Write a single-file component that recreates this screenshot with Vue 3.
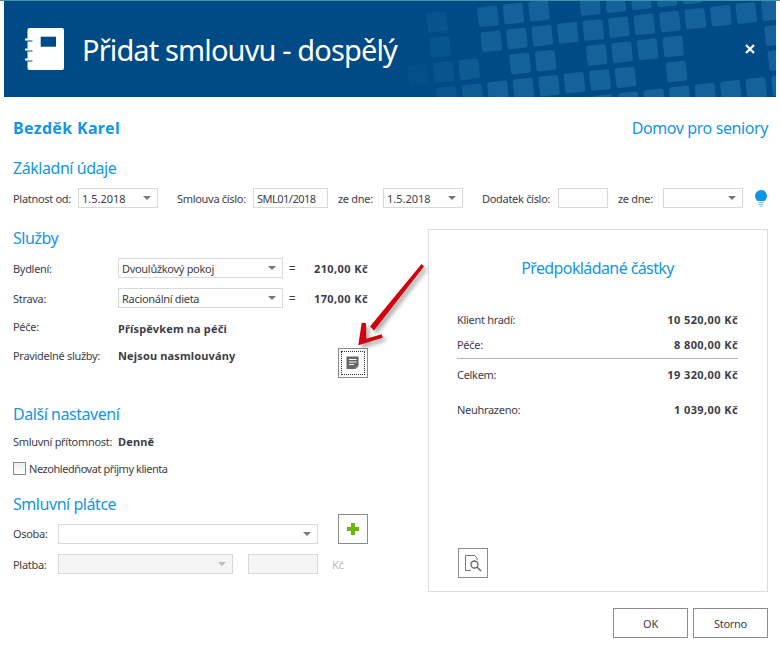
<script setup>
const origin = { x: 400, y: 0 }
const rows = [
  { bx: 570, by: 15, idx: [-6, -4, -3, -2, 0, 1, 2, 3, 4] },
  { bx: 580, by: 90, idx: [-6, -4, -3, -2, -1, 0, 1, 2, 3, 4, 5, 6, 7] },
  { bx: 590, by: 165, idx: [-7, -6, -5, -3, -2, 0, 1, 2, 3, 7] },
  { bx: 600, by: 240, idx: [-6, -5, -4, -3, -2, -1, 0, 1, 3, 7] },
  { bx: 610, by: 315, idx: [-7, 0, 1, 2, 3, 4, 5, 6, 7] }
]
const squares = rows.flatMap((r) =>
  r.idx.map((i) => {
    const x = origin.x + (r.bx + i * 76.5) / 3
    const y = origin.y + (r.by - i * 8.5) / 3
    return { key: `${r.bx}-${i}`, x, y, o: Math.min(1, Math.max(0.12, (x - 400) / 100)) }
  })
)
</script>

<template>
  <div class="page">
    <header class="head">
      <svg class="pattern" width="776" height="96" viewBox="0 1 776 96">
        <rect
          v-for="s in squares"
          :key="s.key"
          :x="s.x - 10"
          :y="s.y - 10"
          width="20"
          height="20"
          rx="2.5"
          fill="#15629b"
          :opacity="s.o"
          :transform="`rotate(-6 ${s.x} ${s.y})`"
        />
      </svg>
      <svg class="book" width="40" height="43" viewBox="0 0 40 43">
        <rect x="2.5" y="0" width="36.5" height="42" rx="2" fill="#fff" />
        <rect x="15.7" y="8.7" width="15.3" height="10" fill="#004a85" />
        <path d="M0 11.4h8M0 21.4h8M0 31.4h8" stroke="#fff" stroke-width="2" />
        <path d="M2.5 13h5M2.5 23h5M2.5 33h5" stroke="#004a85" stroke-width="1" />
      </svg>
      <h1 class="title">Přidat smlouvu - dospělý</h1>
      <svg class="close" width="10" height="10" viewBox="0 0 10 10">
        <path d="M1 1l8 8M9 1l-8 8" stroke="#fff" stroke-width="2.2" />
      </svg>
    </header>

    <main class="body">
      <div class="name-row">
        <strong class="name">Bezděk Karel</strong>
        <span class="org">Domov pro seniory</span>
      </div>

      <h2 class="section first">Základní údaje</h2>
      <div class="fields">
        <span class="lbl w65">Platnost od:</span>
        <div class="sel w80"><span>1.5.2018</span><i class="caret"></i></div>
        <span class="lbl w76 ml19">Smlouva číslo:</span>
        <div class="inp w75">SML01/2018</div>
        <span class="lbl w45 ml10">ze dne:</span>
        <div class="sel w80"><span>1.5.2018</span><i class="caret"></i></div>
        <span class="lbl w76 ml19">Dodatek číslo:</span>
        <div class="inp w50"></div>
        <span class="lbl w45 ml10">ze dne:</span>
        <div class="sel w80"><span></span><i class="caret"></i></div>
        <svg class="bulb" width="12" height="17" viewBox="0 0 12 17">
          <path d="M6 0a6 6 0 0 1 6 6c0 2.400-1.500 3.500-2.300 5H2.300C1.500 9.500 0 8.400 0 6a6 6 0 0 1 6-6z" fill="#0e96e6" />
          <path d="M3 12.500h6M3.500 14.500h5M4.500 16.300h3" stroke="#7cc4ee" stroke-width="1" />
        </svg>
      </div>

      <div class="main">
        <section class="left">
          <h2 class="section">Služby</h2>
          <div class="row mt11">
            <span class="lbl w105">Bydlení:</span>
            <div class="sel w165"><span>Dvoulůžkový pokoj</span><i class="caret"></i></div>
            <span class="eq">=</span>
            <b class="amount">210,00 Kč</b>
          </div>
          <div class="row mt10">
            <span class="lbl w105">Strava:</span>
            <div class="sel w165"><span>Racionální dieta</span><i class="caret"></i></div>
            <span class="eq">=</span>
            <b class="amount">170,00 Kč</b>
          </div>
          <div class="row mt10">
            <span class="lbl w105 up">Péče:</span>
            <b class="val">Příspěvkem na péči</b>
          </div>
          <div class="row tall mt10">
            <span class="lbl w105 line16">Pravidelné služby:</span>
            <b class="val line16">Nejsou nasmlouvány</b>
            <button class="icon-btn focus push" type="button" aria-label="Pravidelné služby">
              <svg width="14" height="14" viewBox="0 0 14 14">
                <path d="M0.500 0.500h12v9l-3.500 3.500h-8.500z" fill="#666" />
                <path d="M3 3.500h7.500M3 6h7.500M3 8.500h5" stroke="#fff" stroke-width="1" />
                <path d="M9.500 13.500v-3.500h3.500z" fill="#888" />
              </svg>
            </button>
          </div>

          <h2 class="section mt27">Další nastavení</h2>
          <div class="row single mt10">
            <span class="lbl w105">Smluvní přítomnost:</span>
            <b class="val">Denně</b>
          </div>
          <label class="check">
            <i class="box"></i>
            <span class="check-text">Nezohledňovat příjmy klienta</span>
          </label>

          <h2 class="section mt19">Smluvní plátce</h2>
          <div class="row tall bottom mt1">
            <span class="lbl w45 h20">Osoba:</span>
            <div class="sel w260"><span></span><i class="caret"></i></div>
            <button class="icon-btn ml20" type="button" aria-label="Přidat">
              <svg width="12" height="12" viewBox="0 0 12 12">
                <path d="M4 0h4v4h4v4H8v4H4V8H0V4h4z" fill="#6ab80a" />
              </svg>
            </button>
          </div>
          <div class="row mt10">
            <span class="lbl w45">Platba:</span>
            <div class="sel w175 off"><span></span><i class="caret"></i></div>
            <div class="inp w70 off ml15"></div>
            <span class="kc">Kč</span>
          </div>
        </section>

        <aside class="panel">
          <h2 class="panel-title">Předpokládané částky</h2>
          <div class="sum mt34"><span>Klient hradí:</span><b>10 520,00 Kč</b></div>
          <div class="sum mt9"><span>Péče:</span><b>8 800,00 Kč</b></div>
          <hr class="rule" />
          <div class="sum mt8"><span>Celkem:</span><b>19 320,00 Kč</b></div>
          <div class="sum mt19"><span>Neuhrazeno:</span><b>1 039,00 Kč</b></div>
          <button class="icon-btn preview" type="button" aria-label="Náhled">
            <svg width="17" height="17" viewBox="0 0 17 17">
              <path d="M12 5V3L9.500 0.500H0.500V15.500H6" fill="none" stroke="#777" />
              <circle cx="9.500" cy="9.500" r="3.500" fill="none" stroke="#666" stroke-width="1.300" />
              <path d="M12 12l4 4" stroke="#666" stroke-width="1.500" />
            </svg>
          </button>
        </aside>
      </div>

      <footer class="actions">
        <button class="btn" type="button">OK</button>
        <button class="btn" type="button">Storno</button>
      </footer>
    </main>

    <svg class="arrow" width="90" height="100" viewBox="0 0 90 100">
      <path d="M81.500 13L84 15.500L34 79.500L30 75.500z" fill="#d4000f" />
      <path d="M18.300 94.300L21.700 71.700L26 72.300L26.200 87.800L41.700 83.300L42.700 86.700z" fill="#d4000f" />
    </svg>
  </div>
</template>

<style scoped>
.page {
  position: relative;
  width: 780px;
  height: 648px;
  overflow: hidden;
  background: #fff;
  font-family: "Noto Sans", "DejaVu Sans", sans-serif;
  font-size: 11px;
  letter-spacing: -0.3px;
  color: #3d3d48;
  border-top: 1px solid #3c95a8;
  box-sizing: border-box;
}
.head {
  position: relative;
  display: flex;
  align-items: center;
  width: 772px;
  height: 96px;
  margin-left: 4px;
  background: #004a85;
  overflow: hidden;
}
.pattern {
  position: absolute;
  left: -4px;
  top: 0;
}
.book {
  position: relative;
  margin-left: 21px;
  flex: none;
}
.title {
  position: relative;
  margin: 0 0 0 17px;
  font-size: 29px;
  font-weight: 400;
  color: #fff;
  letter-spacing: -0.87px;
}
.close {
  position: absolute;
  left: 741px;
  top: 43px;
}
.body {
  padding: 0 12px 0 13px;
}
.name-row {
  display: flex;
  justify-content: space-between;
  align-items: center;
  height: 22px;
  margin-top: 20px;
}
.name {
  font-size: 16px;
  font-weight: 700;
  letter-spacing: 0.33px;
  color: #1496e6;
}
.org {
  font-size: 16px;
  letter-spacing: -0.4px;
  color: #1496e6;
}
.section {
  height: 18px;
  margin: 0;
  font-size: 16px;
  line-height: 18px;
  font-weight: 400;
  letter-spacing: -0.45px;
  color: #1496e6;
}
.first {
  margin-top: 20px;
}
.fields {
  display: flex;
  align-items: center;
  height: 20px;
  margin-top: 11px;
}
.lbl {
  flex: none;
  white-space: nowrap;
}
.w45 { width: 45px; }
.w50 { width: 50px; }
.w65 { width: 65px; }
.w70 { width: 70px; }
.w75 { width: 75px; }
.w76 { width: 76px; }
.w80 { width: 80px; }
.w105 { width: 105px; }
.w165 { width: 165px; }
.w175 { width: 175px; }
.w260 { width: 260px; }
.ml10 { margin-left: 10px; }
.ml15 { margin-left: 15px; }
.ml19 { margin-left: 19px; }
.ml20 { margin-left: 20px; }
.mt1 { margin-top: 1px; }
.mt8 { margin-top: 8px; }
.mt9 { margin-top: 9px; }
.mt10 { margin-top: 10px; }
.mt11 { margin-top: 11px; }
.mt19 { margin-top: 19px; }
.mt27 { margin-top: 27px; }
.mt34 { margin-top: 34px; }
.sel,
.inp {
  flex: none;
  display: flex;
  align-items: center;
  justify-content: space-between;
  box-sizing: border-box;
  height: 20px;
  padding: 0 3px;
  border: 1px solid #d9d9d9;
  background: #fff;
  white-space: nowrap;
}
.sel.w80 {
  letter-spacing: 0;
}
.inp {
  letter-spacing: -0.5px;
}
.caret {
  flex: none;
  width: 0;
  height: 0;
  margin-right: 3px;
  border-left: 4px solid transparent;
  border-right: 4px solid transparent;
  border-top: 4px solid #777;
}
.off {
  background: #f5f5f5;
}
.off .caret {
  border-top-color: #bbb;
}
.bulb {
  flex: none;
  margin-left: 12px;
}
.main {
  display: flex;
  margin-top: 21px;
}
.left {
  flex: none;
  width: 355px;
  margin-right: 60px;
}
.row {
  display: flex;
  align-items: center;
  height: 20px;
}
.row.tall {
  align-items: flex-start;
  height: 30px;
}
.row.bottom {
  align-items: flex-end;
}
.row.single {
  height: 16px;
}
.line16 {
  line-height: 16px;
}
.h20 {
  line-height: 20px;
}
.up {
  padding-bottom: 4px;
}
.eq {
  width: 10px;
  margin-left: 4px;
  font-size: 12px;
  text-align: center;
}
.amount {
  margin-left: auto;
  font-weight: 700;
  letter-spacing: 0.4px;
}
.val {
  font-weight: 700;
  letter-spacing: 0.15px;
}
.push {
  margin-left: auto;
}
.icon-btn {
  flex: none;
  display: flex;
  align-items: center;
  justify-content: center;
  box-sizing: border-box;
  width: 30px;
  height: 30px;
  padding: 0;
  border: 1px solid #8c8c8c;
  background: #fff;
}
.focus {
  outline: 1px dotted #333;
  outline-offset: -4px;
}
.check {
  display: flex;
  align-items: center;
  gap: 3px;
  height: 14px;
  margin-top: 13px;
}
.check-text {
  letter-spacing: -0.45px;
  line-height: 14px;
}
.box {
  flex: none;
  box-sizing: border-box;
  width: 13px;
  height: 13px;
  margin-bottom: 1px;
  border: 1px solid #8c8c8c;
  background: linear-gradient(#eee, #fff);
}
.kc {
  margin-left: 14px;
  color: #bdbdbd;
}
.panel {
  flex: none;
  display: flex;
  flex-direction: column;
  box-sizing: border-box;
  width: 340px;
  height: 363px;
  padding: 28px 29px 13px 28px;
  border: 1px solid #dcdcdc;
}
.panel-title {
  height: 20px;
  margin: 0;
  font-size: 16px;
  line-height: 20px;
  font-weight: 400;
  letter-spacing: -0.6px;
  text-align: center;
  color: #1496e6;
}
.sum {
  display: flex;
  justify-content: space-between;
  height: 16px;
  line-height: 16px;
}
.sum b {
  font-weight: 700;
  letter-spacing: 0.4px;
}
.rule {
  height: 1px;
  margin: 5px 0 0;
  border: 0;
  background: #b4b4b4;
}
.preview {
  margin-top: auto;
  margin-left: 1px;
}
.actions {
  display: flex;
  justify-content: flex-end;
  gap: 5px;
  margin-top: 16px;
}
.btn {
  width: 75px;
  height: 30px;
  padding: 0;
  border: 1px solid #8c8c8c;
  background: #fff;
  font: inherit;
  letter-spacing: -0.3px;
  color: inherit;
}
.arrow {
  position: absolute;
  left: 340px;
  top: 250px;
  filter: drop-shadow(3px 3px 2px rgba(0, 0, 0, 0.35));
}
</style>
